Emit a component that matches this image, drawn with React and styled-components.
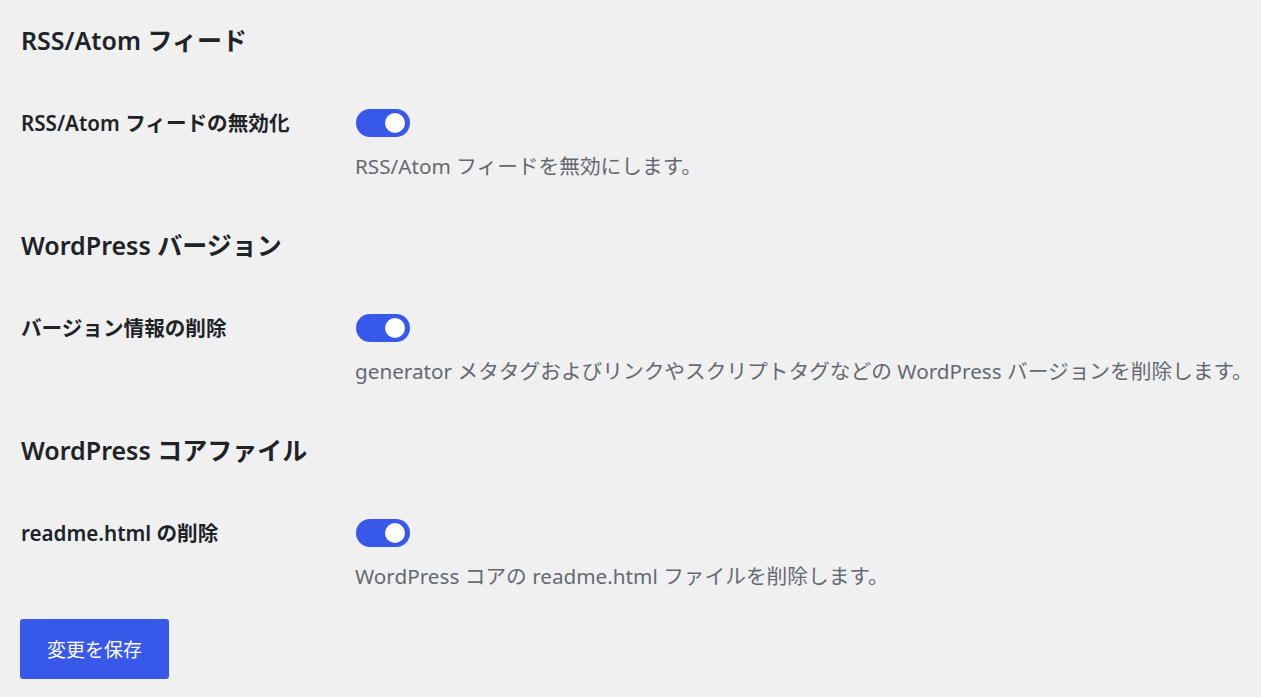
import React from "react";
import styled, { createGlobalStyle } from "styled-components";

const GlobalStyle = createGlobalStyle`
  html, body {
    margin: 0;
    padding: 0;
    background: #f0f0f1;
  }
  body {
    font-family: "Noto Sans", "Noto Sans CJK JP", sans-serif;
    color: #1d2327;
  }
`;

const Page = styled.form`
  padding: 23px 0 0 21px;
`;

const Section = styled.section`
  margin-bottom: 47px;
  &:last-of-type {
    margin-bottom: 28px;
  }
`;

const Heading = styled.h2`
  margin: 0 0 52px;
  font-size: 25px;
  line-height: 34px;
  font-weight: 600;
  color: #1d2327;
`;

const Row = styled.div`
  display: grid;
  grid-template-columns: 334px 1fr;
  align-items: start;
`;

const Label = styled.label`
  font-size: 20.6px;
  line-height: 28px;
  font-weight: 600;
  color: #1d2327;
`;

const Field = styled.div`
  display: flex;
  flex-direction: column;
  align-items: flex-start;
`;

const Toggle = styled.span`
  display: flex;
  align-items: center;
  justify-content: ${(p) => (p.$on ? "flex-end" : "flex-start")};
  box-sizing: border-box;
  width: 54px;
  height: 28px;
  padding: 0 5px;
  margin-left: 1px;
  border-radius: 14px;
  background: ${(p) => (p.$on ? "#3858e9" : "#8c8f94")};
  cursor: pointer;
`;

const Knob = styled.span`
  width: 20px;
  height: 20px;
  border-radius: 50%;
  background: #ffffff;
`;

const Description = styled.p`
  margin: 14px 0 0;
  font-size: 20.7px;
  line-height: 30px;
  color: #646970;
`;

const SaveButton = styled.button`
  width: 149px;
  height: 60px;
  margin-left: -1px;
  border: 0;
  border-radius: 3px;
  background: #3858e9;
  color: #ffffff;
  font-family: inherit;
  font-size: 19px;
  cursor: pointer;
`;

const sections = [
  {
    title: "RSS/Atom フィード",
    label: "RSS/Atom フィードの無効化",
    description: "RSS/Atom フィードを無効にします。",
  },
  {
    title: "WordPress バージョン",
    label: "バージョン情報の削除",
    description:
      "generator メタタグおよびリンクやスクリプトタグなどの WordPress バージョンを削除します。",
  },
  {
    title: "WordPress コアファイル",
    label: "readme.html の削除",
    description: "WordPress コアの readme.html ファイルを削除します。",
  },
];

export default function App() {
  return (
    <>
      <GlobalStyle />
      <Page onSubmit={(e) => e.preventDefault()}>
        {sections.map((s) => (
          <Section key={s.title}>
            <Heading>{s.title}</Heading>
            <Row>
              <Label>{s.label}</Label>
              <Field>
                <Toggle $on role="switch" aria-checked="true">
                  <Knob />
                </Toggle>
                <Description>{s.description}</Description>
              </Field>
            </Row>
          </Section>
        ))}
        <SaveButton type="submit">変更を保存</SaveButton>
      </Page>
    </>
  );
}
